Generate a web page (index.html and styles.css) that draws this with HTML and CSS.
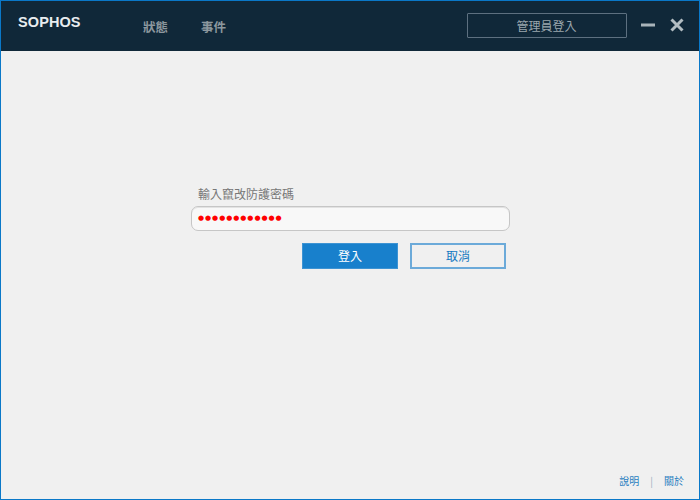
FILE: index.html
```html
<!DOCTYPE html>
<html lang="zh-Hant">
<head>
<meta charset="utf-8">
<title>Sophos</title>
<link rel="stylesheet" href="styles.css">
</head>
<body>
<div class="window">
  <header class="topbar">
    <div class="logo">SOPHOS</div>
    <nav class="nav">
      <a class="nav-item">狀態</a>
      <a class="nav-item">事件</a>
    </nav>
    <div class="top-right">
      <button class="admin">管理員登入</button>
      <svg class="win-icon" width="14" height="14" viewBox="0 0 14 14"><path d="M0 7h14" stroke="#a9b4ba" stroke-width="3"/></svg>
      <svg class="win-icon close" width="14" height="14" viewBox="0 0 14 14"><path d="M1.5 1.5l11 11M12.5 1.5l-11 11" stroke="#b3bdc2" stroke-width="3"/></svg>
    </div>
  </header>
  <main class="content">
    <form class="form">
      <label class="label">輸入竄改防護密碼</label>
      <div class="field"><span class="dots">●●●●●●●●●●●●</span></div>
      <div class="actions">
        <button type="button" class="btn primary">登入</button>
        <button type="button" class="btn secondary">取消</button>
      </div>
    </form>
  </main>
  <footer class="footer">
    <a class="link">說明</a>
    <span class="sep">|</span>
    <a class="link">關於</a>
  </footer>
</div>
</body>
</html>
```
FILE: styles.css
```css
* { box-sizing: border-box; }
html, body { margin: 0; padding: 0; }
body {
  width: 700px;
  height: 500px;
  overflow: hidden;
  font-family: "Noto Sans CJK TC", "Liberation Sans", sans-serif;
}
.window {
  width: 700px;
  height: 500px;
  border: 1px solid #0a78c8;
  background: #f0f0f0;
  display: flex;
  flex-direction: column;
}
.topbar {
  height: 50px;
  flex: none;
  background: #102839;
  display: flex;
  align-items: center;
  padding: 0 16px 0 17px;
}
.logo {
  width: 125px;
  font-family: "Liberation Sans", sans-serif;
  font-weight: 700;
  font-size: 14.5px;
  letter-spacing: 0.1px;
  color: #e8edf0;
  margin-top: -8px;
}
.nav { display: flex; gap: 33px; padding-top: 1px; }
.nav-item { font-size: 12.5px; font-weight: 700; color: #8c979e; }
.top-right {
  margin-left: auto;
  display: flex;
  align-items: center;
  gap: 14px;
  margin-top: -1px;
}
.win-icon { margin-bottom: 2px; }
.close { margin-left: 1px; margin-right: -1px; }
.admin {
  width: 160px;
  height: 25px;
  background: transparent;
  border: 1px solid #5d7080;
  border-radius: 1px;
  color: #9aa6ad;
  font: 12px "Noto Sans CJK TC", sans-serif;
  padding: 0 1px 0 0;
}
.content {
  flex: 1;
  display: flex;
  padding: 134px 0 0 190px;
}
.form { width: 319px; display: flex; flex-direction: column; }
.label {
  font-size: 12px;
  line-height: 18px;
  color: #777;
  padding-left: 7px;
  margin-bottom: 3px;
}
.field {
  height: 25px;
  background: #f8f8f8;
  border: 1px solid #c6c6c6;
  border-radius: 7px;
  box-shadow: inset 0 1px 0 #e2e2e2;
  padding: 0 0 1px 6px;
  display: flex;
  align-items: center;
}
.dots {
  font-family: "DejaVu Sans", sans-serif;
  font-size: 7px;
  letter-spacing: 0.94px;
  color: #ff0000;
  line-height: 1;
}
.actions {
  display: flex;
  gap: 12px;
  margin-top: 12px;
  padding-left: 111px;
}
.btn {
  width: 96px;
  height: 26px;
  padding: 0 0 2px;
  font: 12px "Noto Sans CJK TC", sans-serif;
}
.primary { background: #1880cc; border: 1px solid #3d93d3; color: #fff; }
.secondary { background: #f0f0f0; border: 2px solid #6caad9; color: #1478c0; }
.footer {
  flex: none;
  height: 34px;
  display: flex;
  justify-content: flex-end;
  align-items: flex-start;
  gap: 11px;
  padding: 9px 15px 0 0;
  font-size: 10px;
  line-height: 14px;
}
.link { color: #2a7fc0; }
.sep { color: #9bb0bf; }
```
